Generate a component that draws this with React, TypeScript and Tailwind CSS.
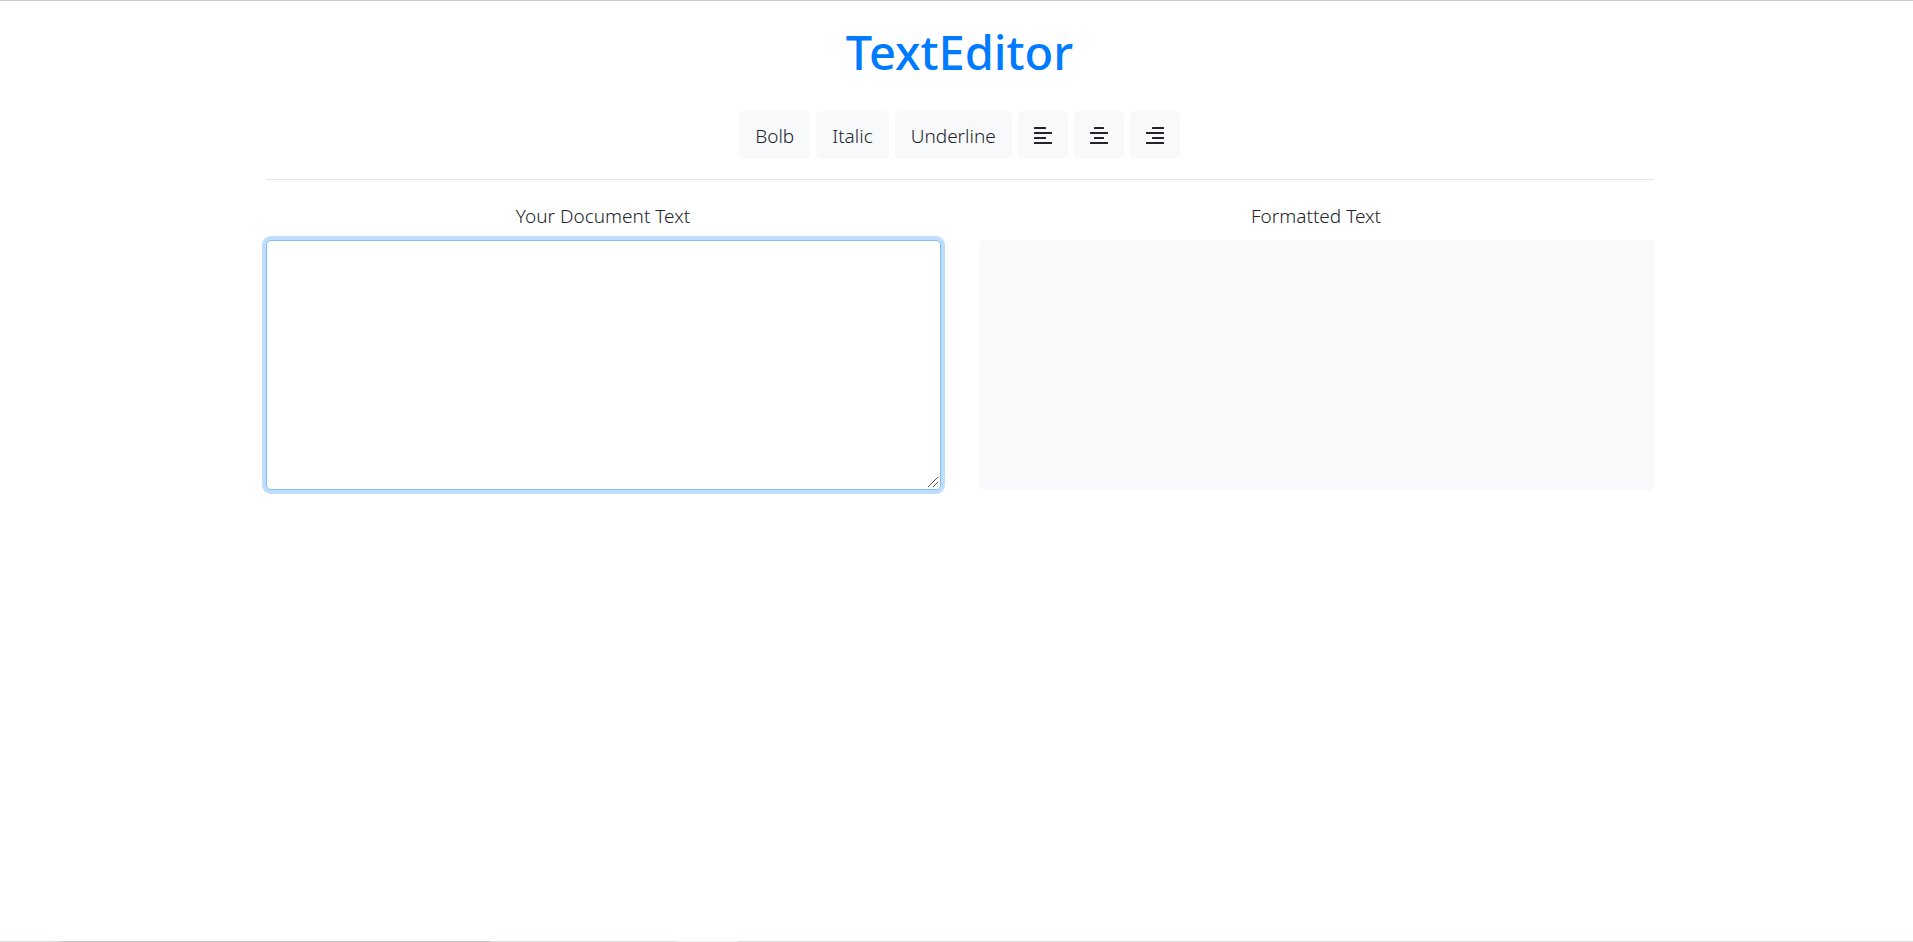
import React, { useState } from "react";

type Align = "left" | "center" | "right";

const shortBars: Record<Align, { x: number; width: number }> = {
  left: { x: 0, width: 12 },
  center: { x: 4, width: 10 },
  right: { x: 6, width: 12 },
};

const alignClass: Record<Align, string> = {
  left: "text-left",
  center: "text-center",
  right: "text-right",
};

function AlignIcon({ align }: { align: Align }) {
  const short = shortBars[align];
  return (
    <svg viewBox="0 0 18 18" className="h-[18px] w-[18px]" fill="currentColor" aria-hidden="true">
      <rect x={short.x} y="0" width={short.width} height="2" rx="0.25" />
      <rect x="0" y="5" width="18" height="2" rx="0.25" />
      <rect x={short.x} y="10" width={short.width} height="2" rx="0.25" />
      <rect x="0" y="15" width="18" height="2" rx="0.25" />
    </svg>
  );
}

const buttonClass =
  "flex h-12 items-center justify-center rounded-[5px] bg-[#f8f9fa] px-4 pt-0.5 hover:bg-[#e2e6ea]";

export default function App() {
  const [text, setText] = useState("");
  const [bold, setBold] = useState(false);
  const [italic, setItalic] = useState(false);
  const [underline, setUnderline] = useState(false);
  const [align, setAlign] = useState<Align>("left");

  return (
    <div className="flex min-h-screen flex-col border-t border-[#cccccc] bg-white font-['Noto_Sans','Open_Sans',sans-serif] text-[19px] leading-[30px] font-[350] text-[#212529]">
      <div className="flex grow flex-col pl-1.5">
        <main className="mx-auto w-full max-w-[1426px] px-[19px]">
          <h1 className="pt-[21px] text-center text-[47px] font-medium leading-[60px] text-[#007bff]">
            TextEditor
          </h1>
          <div className="mt-[29px] flex flex-wrap justify-center gap-[6px] border-b border-[#e5e5e5] pb-5">
            <button type="button" className={buttonClass} onClick={() => setBold(!bold)}>
              Bolb
            </button>
            <button type="button" className={buttonClass} onClick={() => setItalic(!italic)}>
              Italic
            </button>
            <button type="button" className={buttonClass} onClick={() => setUnderline(!underline)}>
              Underline
            </button>
            {(["left", "center", "right"] as Align[]).map((a) => (
              <button
                key={a}
                type="button"
                aria-label={"Align " + a}
                className={buttonClass}
                onClick={() => setAlign(a)}
              >
                <AlignIcon align={a} />
              </button>
            ))}
          </div>
          <div className="mt-[21px] grid grid-cols-2 gap-[38px]">
            <div className="flex flex-col gap-[9px]">
              <label htmlFor="document-text" className="text-center">
                Your Document Text
              </label>
              <div className="relative">
                <textarea
                  id="document-text"
                  value={text}
                  onChange={(e) => setText(e.target.value)}
                  className="block h-[250px] w-full resize-y rounded-[5px] border border-[#80bdff] bg-white px-4 py-2 text-[#495057] shadow-[0_0_0_4px_#bfdeff] outline-none"
                />
                <svg
                  viewBox="0 0 15 15"
                  className="pointer-events-none absolute right-px bottom-px h-[15px] w-[15px] rounded-br-[4px] bg-white"
                  stroke="#555555"
                  strokeWidth="1"
                  aria-hidden="true"
                >
                  <path d="M3 13L13 3M8 13L13 8" />
                </svg>
              </div>
            </div>
            <div className="flex flex-col gap-[9px]">
              <p className="text-center">Formatted Text</p>
              <div
                className={[
                  "h-[250px] w-full overflow-auto whitespace-pre-wrap rounded-[5px] bg-[#f8f9fa] px-4 py-2",
                  bold ? "font-bold" : "",
                  italic ? "italic" : "",
                  underline ? "underline" : "",
                  alignClass[align],
                ].join(" ")}
              >
                {text}
              </div>
            </div>
          </div>
        </main>
      </div>
      <div className="flex h-px">
        <div className="w-[60px] bg-[#e0d5e2]" />
        <div className="w-[430px] bg-[#c8c8c8]" />
        <div className="w-[186px] bg-[#e0d5e2]" />
        <div className="w-[61px] bg-[#f0f0f0]" />
        <div className="grow bg-[#e0d5e2]" />
      </div>
    </div>
  );
}
